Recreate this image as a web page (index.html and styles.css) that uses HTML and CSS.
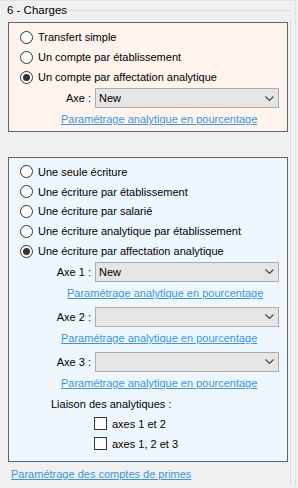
FILE: index.html
```html
<!DOCTYPE html>
<html lang="fr">

<head>
  <meta charset="UTF-8">
  <title>6 - Charges</title>
  <link rel="stylesheet" href="styles.css">
</head>

<body>
  <div class="frame">
    <div class="group-head">
      <span class="group-title">6 - Charges</span>
      <span class="rule"></span>
    </div>

    <div class="group-body">
      <!-- Transfert des comptes -->
      <div class="panel peach">
        <label class="row"><span class="radio"></span>Transfert simple</label>
        <label class="row"><span class="radio"></span>Un compte par établissement</label>
        <label class="row"><span class="radio checked"></span>Un compte par affectation analytique</label>
        <div class="axe-row">
          <span class="axe-label">Axe :</span>
          <div class="select"><span>New</span>
            <svg class="chev" viewBox="0 0 9 5" width="9" height="5"><path d="M0.5 0.5 L4.5 4.5 L8.5 0.5" fill="none" stroke="#444" stroke-width="1.1" /></svg>
          </div>
        </div>
        <div class="link-row"><a class="link">Paramétrage analytique en pourcentage</a></div>
      </div>

      <!-- Ecritures -->
      <div class="panel blue">
        <label class="row"><span class="radio"></span>Une seule écriture</label>
        <label class="row"><span class="radio"></span>Une écriture par établissement</label>
        <label class="row"><span class="radio"></span>Une écriture par salarié</label>
        <label class="row"><span class="radio"></span>Une écriture analytique par établissement</label>
        <label class="row"><span class="radio checked"></span>Une écriture par affectation analytique</label>

        <div class="axe-row tight">
          <span class="axe-label">Axe 1 :</span>
          <div class="select"><span>New</span>
            <svg class="chev" viewBox="0 0 9 5" width="9" height="5"><path d="M0.5 0.5 L4.5 4.5 L8.5 0.5" fill="none" stroke="#444" stroke-width="1.1" /></svg>
          </div>
        </div>
        <div class="link-row shifted"><a class="link">Paramétrage analytique en pourcentage</a></div>

        <div class="axe-row">
          <span class="axe-label">Axe 2 :</span>
          <div class="select">
            <svg class="chev" viewBox="0 0 9 5" width="9" height="5"><path d="M0.5 0.5 L4.5 4.5 L8.5 0.5" fill="none" stroke="#444" stroke-width="1.1" /></svg>
          </div>
        </div>
        <div class="link-row"><a class="link">Paramétrage analytique en pourcentage</a></div>

        <div class="axe-row">
          <span class="axe-label">Axe 3 :</span>
          <div class="select">
            <svg class="chev" viewBox="0 0 9 5" width="9" height="5"><path d="M0.5 0.5 L4.5 4.5 L8.5 0.5" fill="none" stroke="#444" stroke-width="1.1" /></svg>
          </div>
        </div>
        <div class="link-row"><a class="link">Paramétrage analytique en pourcentage</a></div>

        <div class="liaison">Liaison des analytiques :</div>
        <label class="check-row"><span class="check"></span>axes 1 et 2</label>
        <label class="check-row"><span class="check"></span>axes 1, 2 et 3</label>
      </div>

      <a class="link primes">Paramétrage des comptes de primes</a>
    </div>
  </div>
</body>

</html>
```

FILE: styles.css
```css
body {
  margin: 0;
  background-color: #f0f0f0;
  font-family: "Liberation Sans", Arial, sans-serif;
  font-size: 11px;
  color: #000;
}

.frame {
  height: 487px;
  border-top: 1px solid #e3e3e3;
  border-right: 1px solid #e3e3e3;
  width: 295px;
}

.group-head {
  display: flex;
  align-items: center;
  height: 18px;
  padding-left: 7px;
}

.group-title {
  font-size: 11.5px;
  line-height: 16px;
  margin-right: 3px;
}

.rule {
  flex: 1;
  height: 0;
  border-top: 1px solid #dcdcdc;
  margin-right: 4px;
}

.group-body {
  border-right: 1px solid #dcdcdc;
  margin-right: 4px;
  padding-top: 3px;
  height: 466px;
  box-sizing: border-box;
}

.panel {
  margin-left: 8px;
  width: 280px;
  box-sizing: border-box;
  border: 1px solid #646464;
  padding: 4px 0 0 11px;
  display: flex;
  flex-direction: column;
}

.peach {
  background-color: #fff3ee;
  height: 110px;
  margin-bottom: 25px;
}

.blue {
  background-color: #eff7fe;
  height: 305px;
}

.row {
  display: flex;
  align-items: center;
  height: 20px;
  white-space: nowrap;
}

.blue .row {
  height: 19.8px;
}

.radio {
  width: 11px;
  height: 11px;
  border: 1px solid #333;
  border-radius: 50%;
  background: #fff;
  margin-right: 5px;
  flex-shrink: 0;
  display: flex;
  align-items: center;
  justify-content: center;
}

.radio.checked::after {
  content: "";
  width: 7px;
  height: 7px;
  border-radius: 50%;
  background: #333;
}

.axe-row {
  display: flex;
  align-items: center;
  height: 20px;
  margin-top: 3px;
}

.axe-row.tight {
  margin-top: 1px;
}

.peach .axe-row {
  margin-top: 1px;
}

.axe-label {
  width: 71px;
  text-align: right;
  margin-right: 4px;
}

.select {
  width: 184px;
  height: 20px;
  box-sizing: border-box;
  border: 1px solid #adadad;
  background: #e5e5e5;
  display: flex;
  align-items: center;
  padding-left: 3px;
}

.chev {
  margin-left: auto;
  margin-right: 4px;
}

.link-row {
  height: 22px;
  display: flex;
  align-items: center;
  padding-left: 41px;
}

.link-row.shifted {
  padding-left: 47px;
}

.link {
  color: #3a96dd;
  text-decoration: underline;
  white-space: nowrap;
}

.liaison {
  height: 20px;
  line-height: 20px;
  padding-left: 31px;
}

.check-row {
  display: flex;
  align-items: center;
  height: 20px;
  padding-left: 74px;
}

.check {
  width: 11px;
  height: 11px;
  border: 1px solid #333;
  background: #fff;
  margin-right: 5px;
}

.primes {
  display: block;
  margin: 4px 0 0 11px;
  line-height: 16px;
}
```
